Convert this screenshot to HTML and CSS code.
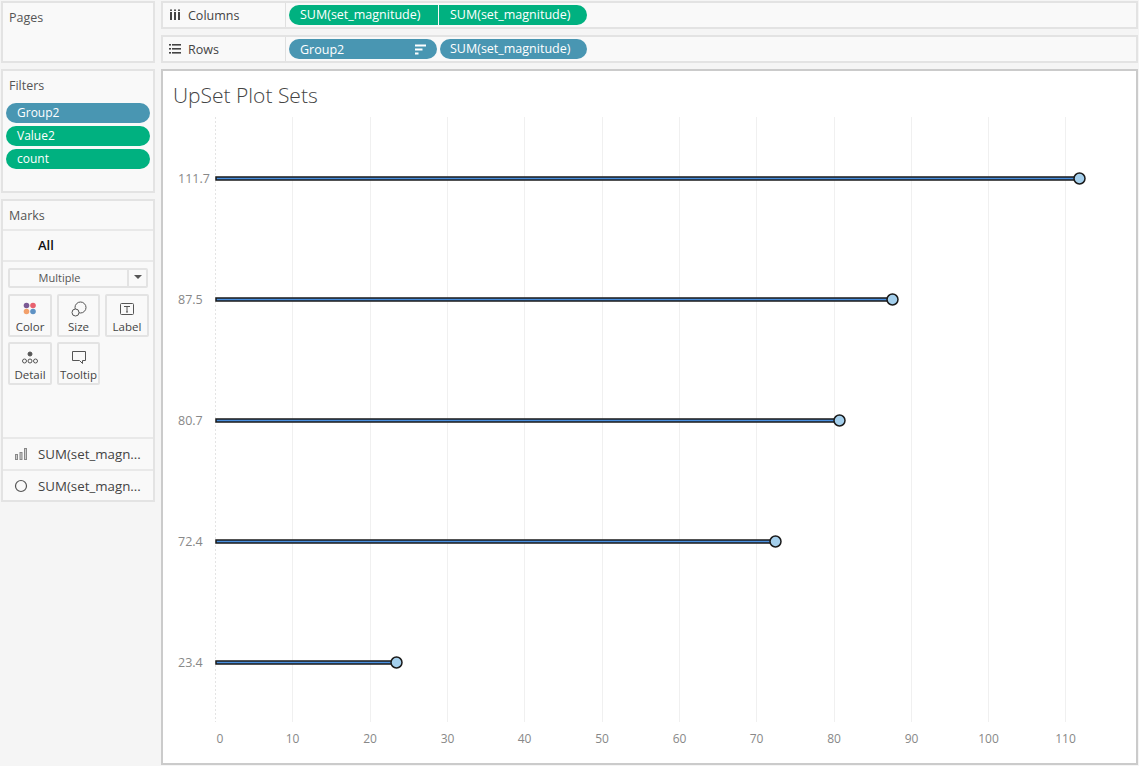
FILE: index.html
```html
<!DOCTYPE html>
<html>
<head>
	<title>UpSet Plot Sets</title>
	<link rel="stylesheet" href="styles.css">
</head>
<body>
	<div class="side">
		<div class="card pages"><div class="card-title">Pages</div></div>
		<div class="card filters">
			<div class="card-title">Filters</div>
			<div class="pill blue wide">Group2</div>
			<div class="pill green wide">Value2</div>
			<div class="pill green wide">count</div>
		</div>
		<div class="card marks">
			<div class="card-title marks-title">Marks</div>
			<div class="marks-all">All</div>
			<div class="marks-body">
				<div class="select"><span class="select-text">Multiple</span><span class="select-arrow"></span></div>
				<div class="mark-grid">
					<div class="mark-btn">
						<svg width="16" height="16" viewBox="0 0 16 16"><circle cx="4.5" cy="4.5" r="2.8" fill="#7b5a94"/><circle cx="11" cy="4.5" r="2.8" fill="#e8626f"/><circle cx="4.5" cy="10.5" r="2.8" fill="#f2a06b"/><circle cx="11" cy="10.5" r="2.8" fill="#5f92c4"/></svg>
						<span>Color</span>
					</div>
					<div class="mark-btn">
						<svg width="16" height="16" viewBox="0 0 16 16" fill="none" stroke="#555"><circle cx="9.5" cy="6.5" r="5.5"/><circle cx="4.5" cy="11.5" r="3.5" fill="#f9f9f9"/></svg>
						<span>Size</span>
					</div>
					<div class="mark-btn">
						<svg width="16" height="16" viewBox="0 0 16 16"><rect x="1.5" y="2.5" width="13" height="11" rx="1" fill="none" stroke="#555"/><path d="M5 5.5h6M8 5.5v5.5M7 11h2" fill="none" stroke="#555"/></svg>
						<span>Label</span>
					</div>
					<div class="mark-btn">
						<svg width="16" height="16" viewBox="0 0 16 16" fill="none" stroke="#555"><circle cx="8" cy="5" r="2" fill="#555"/><circle cx="2.5" cy="12" r="2"/><circle cx="8" cy="12" r="2"/><circle cx="13.5" cy="12" r="2"/></svg>
						<span>Detail</span>
					</div>
					<div class="mark-btn">
						<svg width="16" height="16" viewBox="0 0 16 16" fill="none" stroke="#555"><path d="M1.5 2.5h13v9h-3v3l-3-3h-7z"/></svg>
						<span>Tooltip</span>
					</div>
				</div>
			</div>
			<div class="mark-row">
				<svg width="14" height="14" viewBox="0 0 14 14" fill="#ccc" stroke="#888"><rect x="1.5" y="7.5" width="2" height="5"/><rect x="6" y="5.5" width="2" height="7"/><rect x="10.5" y="1.5" width="2" height="11"/></svg>
				<span>SUM(set_magn...</span>
			</div>
			<div class="mark-row">
				<svg width="14" height="14" viewBox="0 0 14 14" fill="none" stroke="#555" stroke-width="1.2"><circle cx="7" cy="7" r="5.5"/></svg>
				<span>SUM(set_magn...</span>
			</div>
		</div>
	</div>

	<div class="main">
		<div class="shelf">
			<div class="shelf-name">
				<svg width="12" height="12" viewBox="0 0 12 12" fill="#444"><rect x="1" y="3" width="2" height="8"/><rect x="5" y="3" width="2" height="8"/><rect x="9" y="3" width="2" height="8"/><rect x="1" y="0.5" width="2" height="1.4"/><rect x="5" y="0.5" width="2" height="1.4"/><rect x="9" y="0.5" width="2" height="1.4"/></svg>
				<span>Columns</span>
			</div>
			<div class="shelf-pills columns">
				<div class="pill green left">SUM(set_magnitude)</div>
				<div class="pill green right">SUM(set_magnitude)</div>
			</div>
		</div>
		<div class="shelf">
			<div class="shelf-name">
				<svg width="12" height="12" viewBox="0 0 12 12" fill="#444"><rect x="0" y="1" width="2" height="1.6"/><rect x="3" y="1" width="9" height="1.6"/><rect x="0" y="5" width="2" height="1.6"/><rect x="3" y="5" width="9" height="1.6"/><rect x="0" y="9" width="2" height="1.6"/><rect x="3" y="9" width="9" height="1.6"/></svg>
				<span>Rows</span>
			</div>
			<div class="shelf-pills">
				<div class="pill blue sorted">Group2
					<svg width="11" height="11" viewBox="0 0 11 11" fill="#fff"><rect x="0" y="0.5" width="11" height="2"/><rect x="0" y="4.5" width="7.5" height="2"/><rect x="0" y="8.5" width="3.5" height="2"/></svg>
				</div>
				<div class="pill blue sum">SUM(set_magnitude)</div>
			</div>
		</div>

		<div class="chart">
			<h1 class="chart-title">UpSet Plot Sets</h1>
			<svg class="plot" width="973" height="694" viewBox="163 71 973 694">
				<g class="grid">
					<line class="zero" x1="215.5" x2="215.5" y1="117" y2="722"/>
					<line x1="292.5" x2="292.5" y1="117" y2="722"/>
					<line x1="370.5" x2="370.5" y1="117" y2="722"/>
					<line x1="447.5" x2="447.5" y1="117" y2="722"/>
					<line x1="524.5" x2="524.5" y1="117" y2="722"/>
					<line x1="602.5" x2="602.5" y1="117" y2="722"/>
					<line x1="679.5" x2="679.5" y1="117" y2="722"/>
					<line x1="756.5" x2="756.5" y1="117" y2="722"/>
					<line x1="834.5" x2="834.5" y1="117" y2="722"/>
					<line x1="911.5" x2="911.5" y1="117" y2="722"/>
					<line x1="988.5" x2="988.5" y1="117" y2="722"/>
					<line x1="1065.5" x2="1065.5" y1="117" y2="722"/>
				</g>
				<g class="bars">
					<rect x="216" y="177" width="863" height="3"/><circle cx="1079.5" cy="178.5" r="5"/>
					<rect x="216" y="298" width="676" height="3"/><circle cx="892.5" cy="299.5" r="5"/>
					<rect x="216" y="419" width="623" height="3"/><circle cx="839.5" cy="420.5" r="5"/>
					<rect x="216" y="540" width="559" height="3"/><circle cx="775.5" cy="541.5" r="5"/>
					<rect x="216" y="661" width="180" height="3"/><circle cx="396.5" cy="662.5" r="5"/>
				</g>
				<g class="labels">
					<text x="178" y="183">111.7</text>
					<text x="178" y="304">87.5</text>
					<text x="178" y="425">80.7</text>
					<text x="178" y="546">72.4</text>
					<text x="178" y="667">23.4</text>
				</g>
				<g class="ticks">
					<text x="220" y="743">0</text>
					<text x="292.5" y="743">10</text>
					<text x="370" y="743">20</text>
					<text x="447.5" y="743">30</text>
					<text x="524.5" y="743">40</text>
					<text x="602" y="743">50</text>
					<text x="679.5" y="743">60</text>
					<text x="756.5" y="743">70</text>
					<text x="834" y="743">80</text>
					<text x="911.5" y="743">90</text>
					<text x="988.5" y="743">100</text>
					<text x="1065.5" y="743">110</text>
				</g>
			</svg>
		</div>
	</div>
</body>
</html>
```

FILE: styles.css
```css
html, body { margin: 0; padding: 0; height: 100%; }
body { display: flex; gap: 6px; width: 1139px; height: 766px; overflow: hidden; padding: 1px 1px 1px 1px; box-sizing: border-box; background: #f5f5f5; font-family: "Open Sans", sans-serif; font-size: 12.5px; color: #555; }

.side { width: 154px; flex: none; display: flex; flex-direction: column; }
.card { box-sizing: border-box; border: 2px solid #e3e3e3; background: #f9f9f9; }
.card-title { padding: 7px 0 0 6px; line-height: 16px; }
.pages { height: 62px; margin-bottom: 6px; }
.filters { height: 124px; margin-bottom: 6px; }
.filters .card-title { margin-bottom: 9px; }
.marks { height: 303px; display: flex; flex-direction: column; }
.marks-title { height: 30px; flex: none; box-sizing: border-box; border-bottom: 2px solid #e9e9e9; }
.marks-all { height: 31px; flex: none; box-sizing: border-box; border-bottom: 2px solid #e9e9e9; padding-left: 35px; line-height: 29px; font-size: 13px; font-weight: 600; color: #111; }
.marks-body { flex: 1; padding: 6px 5px 0; }

.select { display: flex; height: 20px; box-sizing: border-box; border: 2px solid #e3e3e3; border-radius: 2px; line-height: 16px; margin-bottom: 6px; }
.select-text { flex: 1; text-align: center; padding-right: 18px; border-right: 2px solid #e3e3e3; font-size: 11px; }
.select-arrow { width: 17px; position: relative; }
.select-arrow:after { content: ""; position: absolute; left: 5px; top: 5px; border: 4px solid transparent; border-top: 4px solid #555; border-bottom: 0; }

.mark-grid { display: grid; grid-template-columns: 44px 43px 44px; column-gap: 5px; row-gap: 5px; }
.mark-btn { height: 43px; box-sizing: border-box; border: 2px solid #e3e3e3; border-radius: 2px; display: flex; flex-direction: column; align-items: center; padding-top: 5px; line-height: 14px; color: #444; font-size: 11.5px; }
.mark-btn svg { margin-bottom: 3px; }

.mark-row { height: 32px; flex: none; box-sizing: border-box; border-top: 2px solid #e9e9e9; display: flex; align-items: center; gap: 10px; padding-left: 11px; color: #444; font-size: 13.3px; }
.mark-row:last-child { height: 31px; }

.main { flex: 1; display: flex; flex-direction: column; min-width: 0; }
.shelf { height: 28px; flex: none; box-sizing: border-box; border: 2px solid #e3e3e3; background: #f9f9f9; display: flex; margin-bottom: 6px; }
.shelf-name { width: 123px; flex: none; box-sizing: border-box; border-right: 1px solid #e0e0e0; display: flex; align-items: center; gap: 7px; padding-left: 6px; color: #444; }
.shelf-pills { display: flex; gap: 2px; align-items: center; padding-left: 3px; }
.shelf-pills.columns { gap: 1px; }

.pill { height: 20px; box-sizing: border-box; border-radius: 10px; color: #fff; line-height: 19px; padding-left: 11px; font-size: 12.5px; }
.green { background: #00b180; }
.blue { background: #4996b2; }
.wide { width: 144px; margin: 0 0 3px 3px; font-size: 12px; }
.left { width: 149px; border-radius: 10px 0 0 10px; }
.right { width: 148px; border-radius: 0 10px 10px 0; }
.sum { width: 147px; margin-left: 1px; padding-left: 10px; }
.sorted { width: 148px; display: flex; align-items: center; justify-content: space-between; padding-right: 11px; }

.chart { flex: 1; box-sizing: border-box; border: 2px solid #cbcbcb; background: #fff; position: relative; }
.chart-title { margin: 0; padding: 11px 0 0 10px; font-size: 21px; line-height: 26px; font-weight: 300; color: #444; }
.plot { position: absolute; left: 0; top: 0; }

.grid line { stroke: #f0f0f0; stroke-width: 1; }
.grid .zero { stroke: #e4e4e4; stroke-dasharray: 2 2; }
.bars rect { fill: #4a90e0; stroke: #1a1a1a; stroke-width: 1.5; }
.bars circle { fill: #a4cfec; stroke: #1a1a1a; stroke-width: 1.5; r: 5.5px; }
.labels text, .ticks text { font-size: 12.5px; fill: #888; }
.ticks text { text-anchor: middle; font-size: 12px; }
```
